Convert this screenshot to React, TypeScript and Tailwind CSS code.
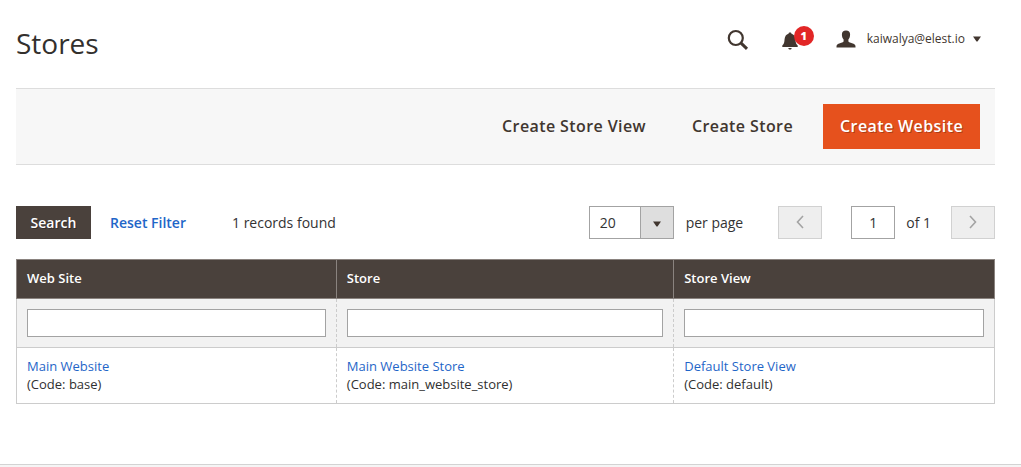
import React from 'react';

interface StoreCell {
  name: string;
  code: string;
}

const columns = ['Web Site', 'Store', 'Store View'];

const rows: StoreCell[][] = [
  [
    { name: 'Main Website', code: 'base' },
    { name: 'Main Website Store', code: 'main_website_store' },
    { name: 'Default Store View', code: 'default' },
  ],
];

const SearchIcon = () => (
  <svg width="22" height="22" viewBox="0 0 22 22" fill="none" stroke="currentColor" aria-hidden="true">
    <circle cx="8.8" cy="9" r="7" strokeWidth="2.2" />
    <path d="M13.8 13.8l6.200 6" strokeWidth="3" />
  </svg>
);

const BellIcon = () => (
  <svg width="16" height="18" viewBox="0 0 16 18" fill="currentColor" aria-hidden="true">
    <path d="M8 .5c.9 0 1.400.5 1.500 1.200 2.300.7 3.600 2.500 3.900 5.300.3 3.200.5 5 2.300 6.600V15H.3v-1.400C2.100 12 2.300 10.200 2.600 7c.3-2.800 1.600-4.600 3.900-5.300C6.600 1 7.100.5 8 .5z" />
    <path d="M6.300 16h3.400c-.2 1-.8 1.500-1.700 1.500S6.500 17 6.300 16z" />
  </svg>
);

const UserIcon = () => (
  <svg width="20" height="18" viewBox="0 0 20 18" fill="currentColor" aria-hidden="true">
    <path d="M10 .5c2.600 0 4.100 1.500 4.100 4 0 2.200-.7 4-1.700 5v2c.6.8 1.900 1.200 3.600 1.700 2.400.8 3.500 1.400 3.500 3.300v1H.5v-1c0-1.900 1.100-2.500 3.500-3.300 1.700-.5 3-.9 3.600-1.700v-2c-1-1-1.700-2.800-1.700-5C5.900 2 7.400.5 10 .5z" />
  </svg>
);

const CaretIcon = () => (
  <svg width="8" height="6" viewBox="0 0 8 6" fill="currentColor" aria-hidden="true">
    <path d="M0 .5h8L4.500 5.500h-1z" />
  </svg>
);

const PageButton = ({ label, path }: { label: string; path: string }) => (
  <button
    type="button"
    disabled
    aria-label={label}
    className="flex h-[33px] w-11 items-center justify-center border border-[#d1d1d1] bg-[#eeeeee] pb-0.5 text-[#a3a3a3]"
  >
    <svg width="8" height="14" viewBox="0 0 8 14" fill="none" stroke="currentColor" strokeWidth="1.6">
      <path d={path} />
    </svg>
  </button>
);

const Header = () => (
  <header className="flex h-22 items-start justify-between text-[#41362f]">
    <h1 className="pt-6 text-[28px] leading-[38px] text-[#33302d]">Stores</h1>
    <div className="flex items-center pt-[25px] pr-3.5">
      <button type="button" aria-label="Search" className="mr-[33px] pt-0.5">
        <SearchIcon />
      </button>
      <button type="button" aria-label="Notifications" className="relative mr-[38px] pt-1">
        <BellIcon />
        <span className="absolute -top-0.5 left-3 flex size-5 items-center justify-center rounded-full bg-[#e22626] text-[11px] font-extrabold text-white">
          1
        </span>
      </button>
      <button type="button" className="flex items-center text-xs leading-7">
        <UserIcon />
        <span className="mr-2 ml-[11px]">kaiwalya@elest.io</span>
        <CaretIcon />
      </button>
    </div>
  </header>
);

const PageActions = () => (
  <div className="flex justify-end border-y border-[#dddddd] bg-[#f7f7f7] px-[15px] py-[15px] text-base font-semibold tracking-wide text-[#41362f]">
    <button type="button" className="mr-[29px] px-[17px] pb-0.5">Create Store View</button>
    <button type="button" className="mr-[13px] pr-[17px] pb-0.5">Create Store</button>
    <button
      type="button"
      className="h-[45px] bg-[#e6511d] px-[17px] pb-0.5 text-white text-shadow-[1px_1px_0_rgba(0,0,0,0.25)]"
    >
      Create Website
    </button>
  </div>
);

const GridControls = () => (
  <div className="flex items-center justify-between pt-[41px] pb-5 text-sm text-[#333333]">
    <div className="flex items-center">
      <button
        type="button"
        className="h-[33px] w-[75px] bg-[#4a413c] font-semibold text-white text-shadow-[1px_1px_0_rgba(0,0,0,0.3)]"
      >
        Search
      </button>
      <button type="button" className="mr-[46px] ml-[19px] font-semibold text-[#1f66c8]">
        Reset Filter
      </button>
      <span>1 records found</span>
    </div>
    <div className="flex items-center">
      <div className="relative">
        <select
          id="per-page"
          defaultValue="20"
          className="h-[33px] w-[85px] appearance-none border border-[#a3a3a3] bg-white pl-2.5"
        >
          <option>20</option>
          <option>30</option>
          <option>50</option>
          <option>100</option>
          <option>200</option>
        </select>
        <span className="pointer-events-none absolute inset-y-0 right-0 flex w-[34px] items-center justify-center border border-[#a3a3a3] bg-[#dedede] pt-0.5 text-[#41362f]">
          <CaretIcon />
        </span>
      </div>
      <label htmlFor="per-page" className="mr-[35px] ml-3">per page</label>
      <PageButton label="Previous page" path="M7 1L1.500 7 7 13" />
      <input
        id="page"
        type="text"
        defaultValue="1"
        className="ml-[29px] h-[33px] w-11 border border-[#a3a3a3] bg-white text-center"
      />
      <label htmlFor="page" className="mr-5 ml-[11px]">of 1</label>
      <PageButton label="Next page" path="M1 1l5.500 6L1 13" />
    </div>
  </div>
);

const StoresTable = () => (
  <table className="w-full table-fixed border-collapse text-left text-[13px] leading-[18px]">
    <colgroup>
      <col className="w-[32.7%]" />
      <col className="w-[34.5%]" />
      <col />
    </colgroup>
    <thead>
      <tr>
        {columns.map((column) => (
          <th key={column} scope="col" className="border border-[#8a837f] bg-[#4a413c] px-2.5 pt-[9px] pb-[11px] font-semibold text-white">
            {column}
          </th>
        ))}
      </tr>
    </thead>
    <tbody className="border-x border-b border-[#cccccc]">
      <tr className="border-b border-[#cccccc] bg-[#f2f2f2]">
        {columns.map((column) => (
          <td key={column} className="border-r border-dashed border-[#cccccc] px-2.5 py-2.5 last:border-solid">
            <input
              type="text"
              aria-label={`Filter by ${column}`}
              className="block h-7 w-full border border-[#a3a3a3] bg-white px-2"
            />
          </td>
        ))}
      </tr>
      {rows.map((row) => (
        <tr key={row[0].code}>
          {row.map((cell) => (
            <td key={cell.code} className="border-r border-dashed border-[#cccccc] px-2.5 pt-[9px] pb-2.5 last:border-solid">
              <a href="#" className="text-[#1f66c8]">{cell.name}</a>
              <br />
              (Code: {cell.code})
            </td>
          ))}
        </tr>
      ))}
    </tbody>
  </table>
);

const App: React.FC = () => {
  return (
    <div className="flex min-h-screen flex-col bg-white font-['Open_Sans',sans-serif] text-[#303030]">
      <main className="grow pr-[26px] pb-15 pl-4">
        <Header />
        <PageActions />
        <GridControls />
        <StoresTable />
      </main>
      <footer className="h-[3px] border-t border-[#d3d3d3] bg-[#f5f5f5]" />
    </div>
  );
};

export default App;
